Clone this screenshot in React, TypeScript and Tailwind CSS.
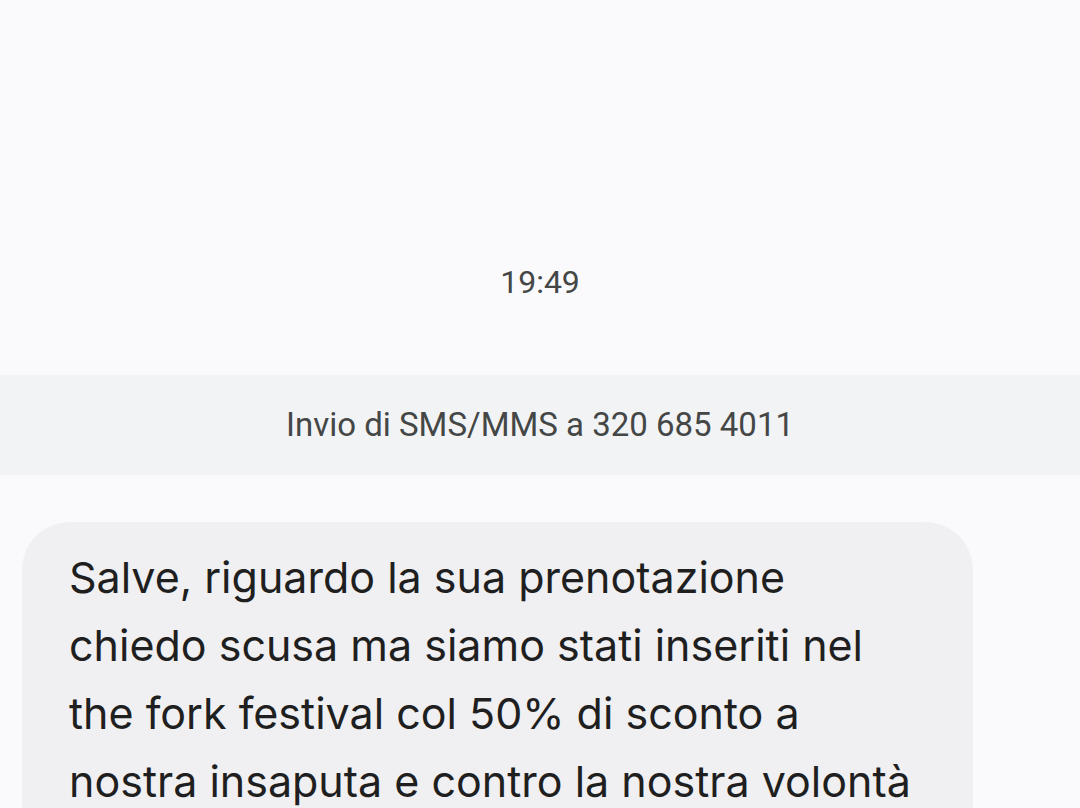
export default function App() {
  return (
    <div className="w-[1080px] h-[808px] overflow-hidden bg-[#fafafc] flex flex-col" style={{ fontFamily: 'Roboto, "Noto Sans", sans-serif' }}>
      <div className="h-[262px] shrink-0" />
      <div className="shrink-0 text-center text-[32px] leading-[40px] text-[#444746]">19:49</div>
      <div className="h-[73px] shrink-0" />
      <div className="shrink-0 h-[100px] bg-[#f2f3f5] flex items-center justify-center text-[33px] text-[#444746]">
        Invio di SMS/MMS a 320 685 4011
      </div>
      <div className="h-[47px] shrink-0" />
      <div
        className="shrink-0 ml-[22px] w-[951px] bg-[#f0f0f2] rounded-[48px] pl-[47px] pr-[20px] pt-[21px] pb-[40px] text-[43px] leading-[68px] text-[#1f1f1f]"
        style={{ fontFamily: 'Inter, Roboto, sans-serif' }}
      >
        Salve, riguardo la sua prenotazione
        <br />
        chiedo scusa ma siamo stati inseriti nel
        <br />
        the fork festival col 50% di sconto a
        <br />
        nostra insaputa e contro la nostra volontà
      </div>
    </div>
  );
}
